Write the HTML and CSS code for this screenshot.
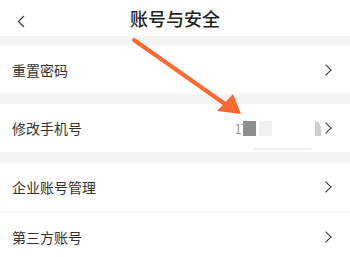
FILE: index.html
```html
<!DOCTYPE html>
<html lang="zh-CN">
<head>
  <meta charset="UTF-8" />
  <meta name="viewport" content="width=device-width, initial-scale=1.0" />
  <title>账号与安全</title>
  <link rel="stylesheet" href="styles.css">
</head>
<body>
  <div class="page">
    <div class="header">
      <span class="back">
        <svg width="8" height="13" viewBox="0 0 8 13"><path d="M7 1 L1.5 6.5 L7 12" fill="none" stroke="#444" stroke-width="1.3"/></svg>
      </span>
      <h1>账号与安全</h1>
    </div>

    <div class="gap"></div>
    <div class="row">
      <span class="label">重置密码</span>
      <span class="chev"></span>
    </div>

    <div class="gap"></div>
    <div class="row">
      <span class="label">修改手机号</span>
      <span class="phone">
        <span class="digits">17</span>
        <span class="mask dark"></span>
        <span class="mask light"></span>
        <span class="mask tail"></span>
      </span>
      <span class="chev"></span>
      <span class="smudge"></span>
    </div>

    <div class="gap"></div>
    <div class="row divided">
      <span class="label">企业账号管理</span>
      <span class="chev"></span>
    </div>
    <div class="row">
      <span class="label">第三方账号</span>
      <span class="chev"></span>
    </div>

    <svg class="arrow" width="350" height="257" viewBox="0 0 350 257">
      <line x1="134" y1="40" x2="225" y2="104" stroke="#fa6b32" stroke-width="4" stroke-linecap="round"/>
      <polygon points="241,114 217,111 233,94" fill="#fa6b32"/>
    </svg>
  </div>
</body>
</html>
```

FILE: styles.css
```css
body {
  margin: 0;
  font-family: "Noto Sans CJK SC", "Noto Sans", sans-serif;
  background: #fff;
  color: #333;
}

.page {
  position: relative;
  width: 350px;
  height: 257px;
  overflow: hidden;
}

.header {
  height: 36px;
  display: flex;
  align-items: center;
  justify-content: center;
  position: relative;
}

.back {
  position: absolute;
  left: 17px;
  top: 9px;
}

.header h1 {
  margin: 0;
  font-size: 18px;
  font-weight: 500;
  color: #222;
  line-height: 1;
}

.gap {
  height: 10px;
  background: #f4f4f4;
}

.row {
  height: 48px;
  display: flex;
  align-items: center;
  padding: 0 18px 0 12px;
  position: relative;
}

.row.divided {
  height: 50px;
  border-bottom: 1px solid #f0f0f0;
}

.label {
  flex: 1;
  font-size: 14px;
  color: #333;
}

.chev {
  width: 7px;
  height: 7px;
  border-top: 1.3px solid #333;
  border-right: 1.3px solid #333;
  transform: rotate(45deg);
  margin-right: 2px;
}

.phone {
  display: flex;
  align-items: center;
  margin-right: 1px;
}

.digits {
  font-size: 13px;
  color: #999;
  letter-spacing: -1px;
}

.mask {
  height: 15px;
  display: block;
  position: relative;
}

.mask.dark {
  width: 13px;
  margin-left: -4px;
  background: #8e8e8e;
}

.mask.light {
  width: 13px;
  margin-left: 3px;
  background: #f1f1f1;
}

.mask.tail {
  width: 6px;
  margin-left: 43px;
  background: #cfcfcf;
  border-top-right-radius: 6px 8px;
}

.smudge {
  position: absolute;
  left: 254px;
  bottom: 2px;
  width: 58px;
  height: 2px;
  border-radius: 2px;
  background: #ececec;
}

.arrow {
  position: absolute;
  left: 0;
  top: 0;
  pointer-events: none;
}
```
